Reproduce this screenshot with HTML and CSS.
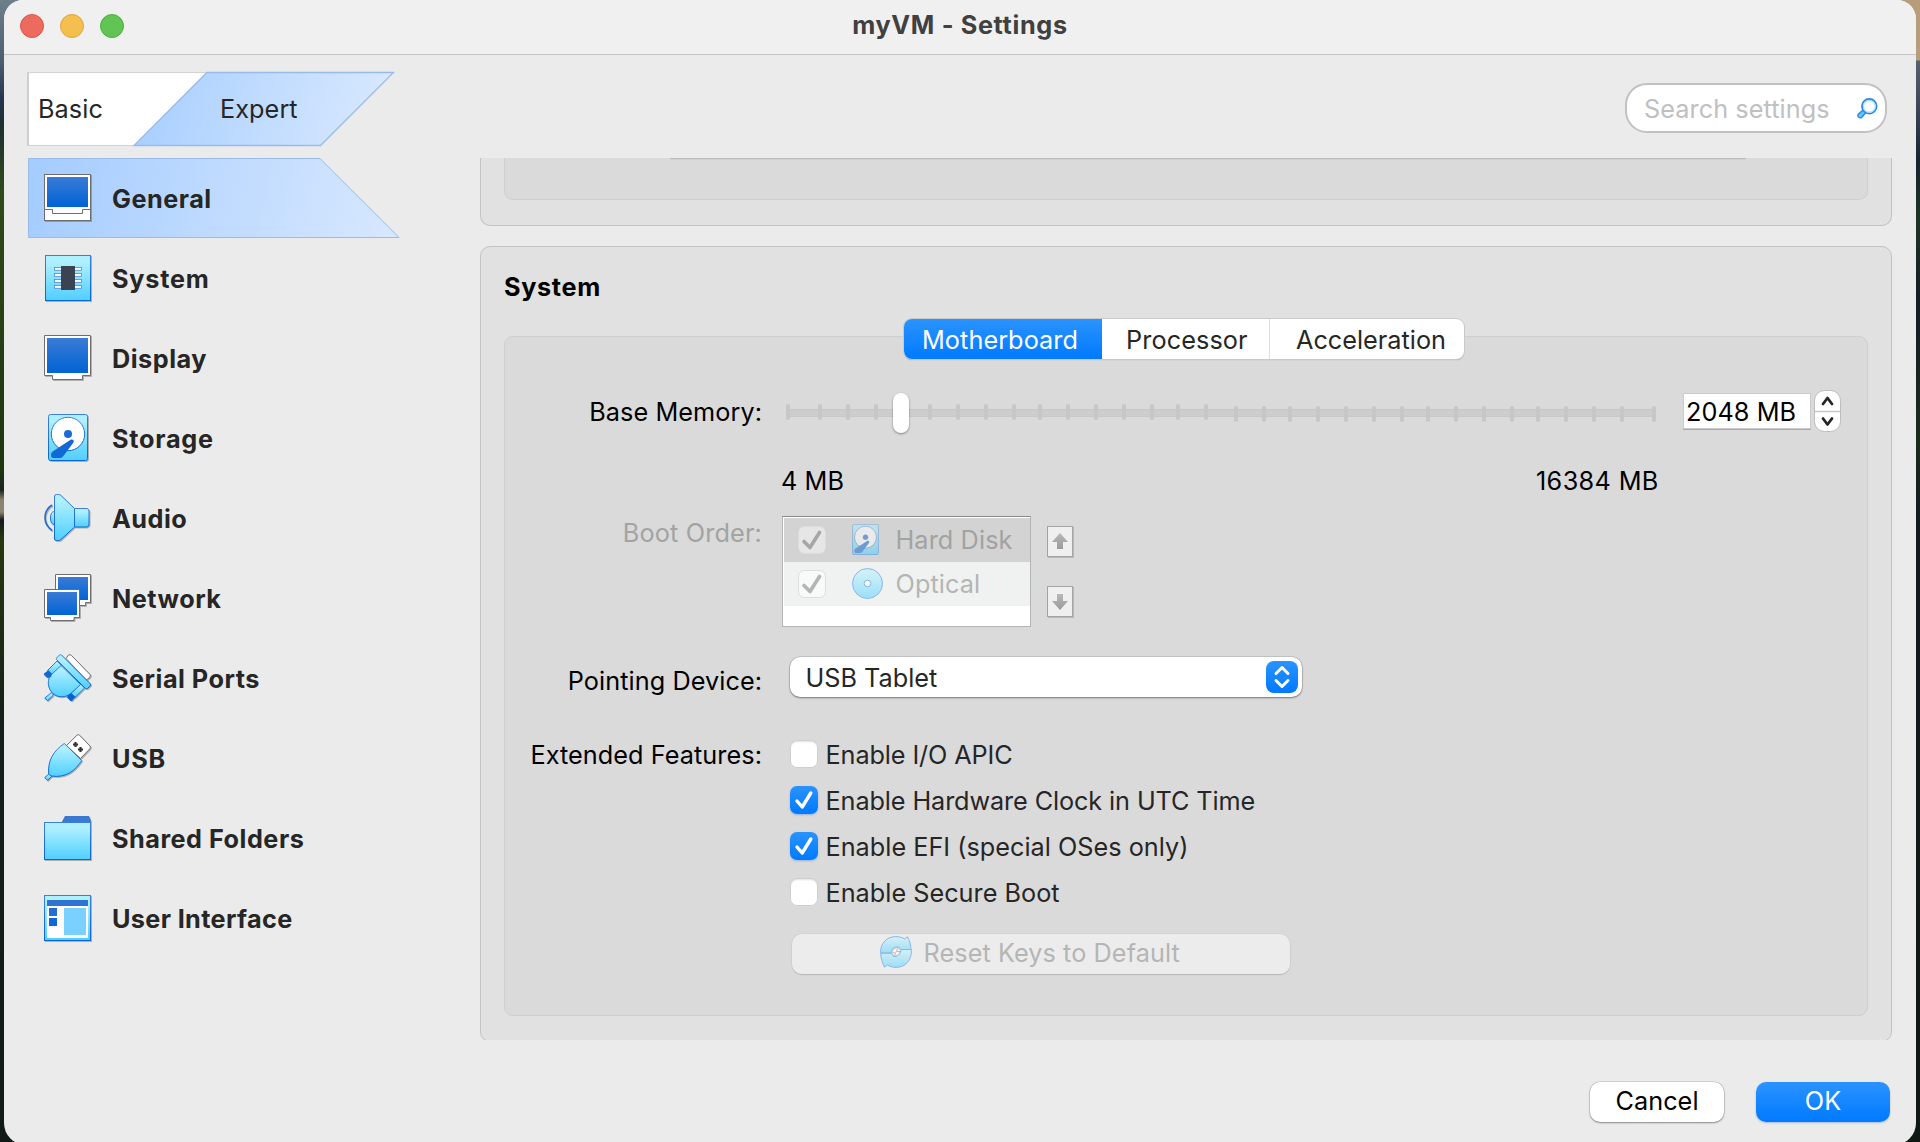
FILE: index.html
```html
<!DOCTYPE html>
<html lang="en">
<head>
<meta charset="utf-8">
<title>myVM - Settings</title>
<link rel="stylesheet" href="styles.css">
</head>
<body>
<svg class="defs" width="0" height="0" aria-hidden="true">
  <defs>
    <linearGradient id="sky" x1="0" y1="0" x2="0" y2="1"><stop offset="0.15" stop-color="#aef0ff"/><stop offset="1" stop-color="#4fcfff"/></linearGradient>
    <linearGradient id="blue" x1="0" y1="0" x2="0" y2="1"><stop offset="0" stop-color="#3a7bd5"/><stop offset="1" stop-color="#0063d5"/></linearGradient>
    <linearGradient id="edge" x1="0" y1="0" x2="0" y2="1"><stop offset="0" stop-color="#3a80d8"/><stop offset="1" stop-color="#0a66d4"/></linearGradient>
    <linearGradient id="grey" x1="0" y1="0" x2="0" y2="1"><stop offset="0" stop-color="#b8b8b8"/><stop offset="1" stop-color="#9a9a9a"/></linearGradient>
    <linearGradient id="pick" gradientUnits="userSpaceOnUse" x1="0" y1="0" x2="372" y2="80"><stop offset="0" stop-color="#a4ccff"/><stop offset="1" stop-color="#d8e8fe"/></linearGradient>
    <linearGradient id="pick2" gradientUnits="userSpaceOnUse" x1="108" y1="30" x2="340" y2="80"><stop offset="0" stop-color="#a8cfff"/><stop offset="1" stop-color="#d6e7fe"/></linearGradient>
    <symbol id="disk" viewBox="0 0 40 47">
      <rect x=".5" y=".5" width="39" height="46" rx="2" fill="url(#sky)" stroke="url(#edge)"/>
      <circle cx="20" cy="20" r="16.7" fill="#fff" stroke="url(#edge)"/>
      <circle cx="20" cy="20" r="4" fill="#1a6bd4"/>
      <path d="M23 25.500Q26.500 25 25.500 28.500L15 42.500Q13.500 44 11.500 44H5Q2.800 43.500 3 41Q3.200 38.500 5 37.300Z" fill="#1268d4"/>
    </symbol>
  </defs>
</svg>

<main class="window">
  <header class="titlebar">
    <div class="lights"><span class="light light-close"></span><span class="light light-min"></span><span class="light light-max"></span></div>
    <h1 class="title">myVM - Settings</h1>
  </header>

  <div class="toolbar">
    <div class="modes">
      <svg class="modes-shape" width="370" height="76" viewBox="0 0 370 76">
        <path d="M1 1.500H180L107 74.500H1Z" fill="#fff" stroke="#d2d2d2"/>
        <path d="M1 1V75" stroke="#cfcfcf" stroke-width="2"/>
        <path d="M180 1.500H366.500L293.500 74.500H107Z" fill="url(#pick2)" stroke="#98bbea" stroke-width="1.300"/>
      </svg>
      <span class="mode mode-basic">Basic</span>
      <span class="mode mode-expert">Expert</span>
    </div>
    <div class="search">
      <span class="search-hint">Search settings</span>
      <svg class="search-icon" width="21" height="21" viewBox="0 0 21 21">
        <path d="M6.500 11.500L1 16.500Q.3 18 1.500 19.200Q3.500 20.500 4.800 19.200L9 14.500Z" fill="#5cc8fb" stroke="#2a86e0" stroke-width="1.300"/>
        <circle cx="12.300" cy="8.300" r="7.300" fill="#fff" stroke="#2f86e2" stroke-width="1.800"/>
        <circle cx="12.300" cy="8.300" r="5.900" fill="none" stroke="#a8e4fb" stroke-width="1.200"/>
      </svg>
    </div>
  </div>

  <div class="body">
    <nav class="nav">
      <div class="nav-item nav-active">
        <svg class="nav-shape" width="374" height="80" viewBox="0 0 374 80"><path d="M.5 .5H292L371 79.500H.5Z" fill="url(#pick)" stroke="#98bbea"/></svg>
        <svg class="icon" viewBox="0 0 48 48"><rect x=".5" y=".5" width="46" height="46" fill="#fff" stroke="#6e6e6e"/><rect x="3" y="3" width="41" height="30" fill="url(#blue)"/><path d="M.5 35.500H8.500V39.500H38.500V35.500H46.500" fill="none" stroke="#6e6e6e"/></svg>
        <span class="nav-label">General</span>
      </div>
      <div class="nav-item">
        <svg class="icon" viewBox="0 0 48 48"><rect x="1.500" y="1.500" width="45" height="45" fill="url(#sky)" stroke="url(#edge)"/><g fill="#fff" stroke="#4f88d8" stroke-width=".8"><rect x="10.500" y="13.500" width="27" height="2.800"/><rect x="10.500" y="19.500" width="27" height="2.800"/><rect x="10.500" y="25.500" width="27" height="2.800"/><rect x="10.500" y="31.500" width="27" height="2.800"/></g><rect x="17" y="12" width="14" height="24" fill="#3b4252"/></svg>
        <span class="nav-label nav-wide">System</span>
      </div>
      <div class="nav-item">
        <svg class="icon" viewBox="0 0 48 48"><path d="M.5 1.500H46.500V41.500H38.500V45.500H8.500V41.500H.5Z" fill="#fff" stroke="#6e6e6e"/><rect x="3" y="4" width="41" height="35" fill="url(#blue)"/></svg>
        <span class="nav-label">Display</span>
      </div>
      <div class="nav-item">
        <svg class="icon" viewBox="0 0 48 48"><use href="#disk" x="4" y="0" width="40" height="47"/></svg>
        <span class="nav-label nav-wide">Storage</span>
      </div>
      <div class="nav-item">
        <svg class="icon" viewBox="0 0 48 48"><g fill="url(#sky)" stroke="url(#edge)"><path d="M10.500 17.500Q6.500 17.500 6.500 24Q6.500 30.500 10.500 30.500Z"/><path d="M30.500 14.500H43Q45 15 45 17V30.500Q45 32.500 43 33H30.500Z"/><path d="M10.500 2Q10.500 .5 12.500 .5H14.500Q16 .5 17 1.500L30.500 14.500V33L17 45.500Q16 46.500 14.500 46.500H12.500Q10.500 46.500 10.500 45Z"/></g><path d="M8 11Q1 15.500 1 23.500Q1 31.500 8 36.500" fill="none" stroke="#1a6fd6" stroke-width="1.600"/></svg>
        <span class="nav-label">Audio</span>
      </div>
      <div class="nav-item">
        <svg class="icon" viewBox="0 0 48 48"><path d="M11.500 .5H46.500V28.500H41.500V31.500H16V28.500H11.500Z" fill="#fff" stroke="#6e6e6e"/><rect x="14" y="3" width="30" height="23" fill="url(#blue)"/><path d="M.5 15.500H35.500V43.500H30V46.500H6.500V43.500H.5Z" fill="#fff" stroke="#6e6e6e"/><rect x="3" y="18" width="30" height="23" fill="url(#blue)"/></svg>
        <span class="nav-label">Network</span>
      </div>
      <div class="nav-item">
        <svg class="icon" viewBox="0 0 48 48"><path d="M22 4.500L24.500 1Q26 0 27.500 1.500L46 20.500Q47 22 45.500 23.500L42.500 26Z" fill="#fff" stroke="#6e6e6e"/><g fill="url(#sky)" stroke="url(#edge)"><path d="M7.500 38.500L.8 44L3.500 46.800L9.500 41Z"/><path d="M13 7L3.500 16.500L8 21L17.500 11.500Z"/><path d="M40.500 34L31 43.500L26.500 39L36 29.500Z"/><path d="M17 11.500L7 21C3.500 25 3.500 32 6.500 36.500C9.500 41.500 15 43.500 20.500 42.500C23.500 42 26 40.500 28 38.500L36.500 30.500Z"/><path d="M12.500 5.500Q12 4.500 13 3.500L15.500 1Q16.500 .2 17.500 1L46.500 30Q47 31 46 32L43.500 34.500Q42.500 35 41.500 34.500Z"/></g><path d="M4.500 16.200L8 19.700L7 23L3.500 24L0 21V19.500Z" fill="#1268d4"/><path d="M27 39L31.500 43L28 47H26.500L23 43.500L24 41Z" fill="#0763d5"/></svg>
        <span class="nav-label">Serial Ports</span>
      </div>
      <div class="nav-item">
        <svg class="icon" viewBox="0 0 48 48"><path d="M22.500 11.500L33 1.200Q34.200 0 35.500 1.200L46 12Q47 13.200 46 14.500L36.500 24.500Z" fill="#fff" stroke="#6e6e6e"/><path d="M29 10.500H34M31.500 8V13M34 15.500H39M36.500 13V18" stroke="#333" stroke-width="2.200"/><g fill="url(#sky)" stroke="url(#edge)"><path d="M6.500 38.500L.8 43.500L3.500 46.500L9 41Z"/><path d="M20.300 9.500L37.700 26.500C32 35.500 23 44.500 7 42L4.700 40C3.500 26 10 16.500 20.300 9.500Z"/></g></svg>
        <span class="nav-label nav-wide">USB</span>
      </div>
      <div class="nav-item">
        <svg class="icon" viewBox="0 0 48 48"><path d="M17.500 8.500L21 2H45L47 7V10H17.500Z" fill="#3a79d2"/><rect x=".5" y="8.500" width="46" height="37" fill="url(#sky)" stroke="url(#edge)"/></svg>
        <span class="nav-label">Shared Folders</span>
      </div>
      <div class="nav-item">
        <svg class="icon" viewBox="0 0 48 48"><rect x=".5" y="1.500" width="46" height="45" fill="url(#sky)" stroke="url(#edge)"/><rect x="3" y="6" width="41" height="6" fill="#3074d3"/><rect x="3" y="12" width="41" height="32" fill="#fff"/><rect x="5" y="14" width="8" height="8" fill="#226fd4"/><rect x="5" y="24" width="8" height="8" fill="#1268d4"/><rect x="20" y="14" width="22" height="27" fill="#7ad0ff"/></svg>
        <span class="nav-label nav-tight">User Interface</span>
      </div>
    </nav>

    <section class="scroll">
      <div class="panel panel-prev">
        <div class="group group-prev"><div class="field-edge"></div></div>
      </div>

      <div class="panel panel-system">
        <h2 class="heading">System</h2>
        <div class="group group-system">
          <div class="tabs">
            <span class="tab tab-on">Motherboard</span>
            <span class="tab tab-cpu">Processor</span>
            <span class="tab tab-acc">Acceleration</span>
          </div>

          <div class="row row-memory">
            <span class="label">Base Memory:</span>
            <svg class="slider" width="880" height="44" viewBox="782 390 880 44">
              <rect x="787" y="409" width="867" height="8" fill="#cdcdcd"/>
              <path d="M787 409.500H1654M787 416.500H1654" stroke="#c8c8c8"/>
              <path d="M788 406V418M820 406V418M848 406V418M876 406V418M930 406V418M958 406V418M986 406V418M1014 406V418M1040 406V418M1068 406V418M1096 406V418M1124 406V418M1152 406V418M1178 406V418M1206 406V418M1236 408V420M1264 408V420M1290 408V420M1318 408V420M1346 408V420M1374 408V420M1402 408V420M1428 408V420M1456 408V420M1484 408V420M1512 408V420M1538 408V420M1566 408V420M1594 408V420M1622 408V420M1654 408V420" stroke="#c7c7c7" stroke-width="4" stroke-linecap="round"/>
              <rect class="thumb" x="893" y="393" width="16" height="40" rx="8" fill="#fff"/>
            </svg>
            <span class="spin-value">2048 MB</span>
            <svg class="stepper" width="28" height="44" viewBox="0 0 28 44">
              <rect x=".5" y=".5" width="26" height="41" rx="10" fill="#fff" stroke="#bdbdbd"/>
              <path d="M1 21.500H26" stroke="#c8c8c8" stroke-width="1.500"/>
              <path d="M9 14L13.500 8L18 14M9 28.500L13.500 34.500L18 28.500" fill="none" stroke="#262626" stroke-width="2.800" stroke-linecap="round" stroke-linejoin="round"/>
            </svg>
          </div>

          <div class="row row-scale">
            <span class="label"></span>
            <span class="scale-min">4 MB</span>
            <span class="scale-max">16384 MB</span>
          </div>

          <div class="row row-boot">
            <span class="label dim">Boot Order:</span>
            <div class="list">
              <div class="list-row list-picked">
                <svg class="check-dim" width="28" height="28" viewBox="0 0 28 28"><rect x=".5" y=".5" width="27" height="27" rx="6" fill="#e6e6e6" stroke="#dcdcdc"/><path d="M6 15.500L12 21.500L21.500 6.500" fill="none" stroke="#a6a6a6" stroke-width="3.600" stroke-linecap="round" stroke-linejoin="round"/></svg>
                <svg class="list-icon" width="31" height="32" viewBox="0 0 31 32"><use href="#disk" x="0" y="0" width="27" height="31"/></svg>
                <span class="list-text">Hard Disk</span>
              </div>
              <div class="list-row list-alt">
                <svg class="check-dim" width="28" height="28" viewBox="0 0 28 28"><rect x=".5" y=".5" width="27" height="27" rx="6" fill="#f8f9f9" stroke="#dcdede"/><path d="M6 15.500L12 21.500L21.500 6.500" fill="none" stroke="#b4b5b5" stroke-width="3.600" stroke-linecap="round" stroke-linejoin="round"/></svg>
                <svg class="list-icon" width="31" height="32" viewBox="0 0 31 32"><circle cx="15.500" cy="15.500" r="15" fill="url(#sky)" stroke="#2f7fe0"/><circle cx="15.500" cy="15.500" r="3.300" fill="#fff" stroke="#3a78d0"/></svg>
                <span class="list-text">Optical</span>
              </div>
            </div>
            <div class="movers">
              <svg class="mover" width="26" height="31" viewBox="0 0 26 31"><rect x=".5" y=".5" width="25" height="30" fill="#efefef" stroke="#a4a4a4"/><path d="M13 7L21 16H16V23H10V16H5Z" fill="url(#grey)"/></svg>
              <svg class="mover" width="26" height="31" viewBox="0 0 26 31"><rect x=".5" y=".5" width="25" height="30" fill="#efefef" stroke="#a4a4a4"/><path d="M13 24L21 15H16V8H10V15H5Z" fill="url(#grey)"/></svg>
            </div>
          </div>

          <div class="row row-pointing">
            <span class="label">Pointing Device:</span>
            <div class="select"><span>USB Tablet</span>
              <svg class="select-knob" width="32" height="32" viewBox="0 0 32 32"><path d="M10 12.500L16 6.500L22 12.500M10 19.500L16 25.500L22 19.500" fill="none" stroke="#fff" stroke-width="3" stroke-linecap="round" stroke-linejoin="round"/></svg>
            </div>
          </div>

          <div class="row row-features">
            <span class="label">Extended Features:</span>
            <div class="checks">
              <div class="check"><span class="box"></span><span class="check-tight">Enable I/O APIC</span></div>
              <div class="check"><svg class="box box-on" viewBox="0 0 28 28"><path d="M7 15L12.200 21L20.800 7" fill="none" stroke="#fff" stroke-width="3.400" stroke-linecap="round" stroke-linejoin="round"/></svg><span class="check-tight">Enable Hardware Clock in UTC Time</span></div>
              <div class="check"><svg class="box box-on" viewBox="0 0 28 28"><path d="M7 15L12.200 21L20.800 7" fill="none" stroke="#fff" stroke-width="3.400" stroke-linecap="round" stroke-linejoin="round"/></svg><span class="check-snug">Enable EFI (special OSes only)</span></div>
              <div class="check"><span class="box"></span><span class="check-snug">Enable Secure Boot</span></div>
            </div>
          </div>

          <div class="row row-reset">
            <span class="label"></span>
            <div class="reset">
              <svg class="reset-icon" width="33" height="33" viewBox="0 0 33 33"><g fill="url(#sky)" stroke="#2f7fe0"><path d="M.7 17C-.2 7 7.500 .6 15.500 .6C19.500 .6 22.500 1.500 24.500 3L27.500 .8C29.500 4.500 31 9 31 13.500H20.500L18.500 11C14.500 10.500 11.500 13 11 17Z"/><path d="M31.300 13.500C32.300 24 25 31.400 16.500 31.400C12.500 31.400 9.500 30.500 7.500 29L4.500 31.200C2.500 27.500 .7 22 .7 17.300H11.500L13.500 20.500C17.500 21 20.500 18 21 13.500Z"/></g><path d="M12 16.800C12.500 13 15 11.500 18 11.800L16.300 15.500H20C19.500 19 17 20.200 14.300 19.800L16 16.800Z" fill="#fff" stroke="#6e6e6e" stroke-width=".7"/></svg>
              <span>Reset Keys to Default</span>
            </div>
          </div>
        </div>
      </div>
    </section>
  </div>

  <footer class="footer">
    <span class="button">Cancel</span>
    <span class="button button-ok">OK</span>
  </footer>
</main>
</body>
</html>
```
FILE: styles.css
```css
* { box-sizing: border-box; }

html, body { height: 100%; margin: 0; overflow: hidden; }

body {
  padding: 0 4px;
  background:
    linear-gradient(#6d7f8a 0, #4d5f70 60px, #24344c 100px, #1d3030 125px, #2f4a1c 190px, #1f3510 470px, #1a2420 490px, #8a8470 500px, #8a8470 512px, #17191c 520px, #26380f 540px, #14201a 720px, #101a16 100%) left / 24px 100% no-repeat,
    linear-gradient(#b79d7c 0, #b79d7c 60px, #59616e 61px, #333f50 120px, #142430 160px, #1d3424 220px, #141c26 300px, #1a2c1c 440px, #121a20 520px, #101814 100%) right / 24px 100% no-repeat,
    #101814;
  font: 400 25.25px/30px Inter, "Liberation Sans", sans-serif;
  letter-spacing: 0.06px;
  color: #262626;
}

h1, h2 { margin: 0; font-size: inherit; font-weight: 700; }

svg { display: block; flex: none; overflow: visible; }

.defs { position: absolute; }

.window {
  display: flex;
  flex-direction: column;
  height: 1145px;
  overflow: hidden;
  border-radius: 19px 19px 22px 22px;
  background: #ebebeb;
}

.titlebar {
  display: grid;
  grid-template-columns: 1fr auto 1fr;
  height: 55px;
  border-bottom: 1px solid #c4c4c4;
  background: #f0f0f0;
}

.lights { display: flex; gap: 16px; padding: 14px 0 0 16px; }
.light { width: 24px; height: 24px; border: 1px solid; border-radius: 50%; }
.light-close { background: #ec6a5e; border-color: #d8584d; }
.light-min { background: #f4bf4f; border-color: #dba43c; }
.light-max { background: #61c554; border-color: #50ab43; }

.title { padding-top: 10px; letter-spacing: 0.65px; color: #404040; }

/* Mode switch and search */
.toolbar {
  display: flex;
  justify-content: space-between;
  height: 103px;
  padding: 16px 29px 0 23px;
}

.modes { position: relative; display: flex; width: 370px; height: 76px; padding-top: 23px; }
.modes-shape { position: absolute; top: 0; left: 0; }
.mode { position: relative; }
.mode-basic { width: 181px; padding-left: 11px; }
.mode-expert { padding-left: 12px; }

.search {
  display: flex;
  justify-content: space-between;
  width: 262px;
  height: 50px;
  margin-top: 12px;
  padding: 9px 7px 0 17px;
  border: 2px solid #c1c1c1;
  border-radius: 22px;
  background: #fff;
}
.search-hint { color: #c0c0c0; }
.search-icon { margin-top: 4px; }

/* Sidebar */
.body { display: flex; height: 882px; }
.nav { width: 476px; padding-left: 24px; }
.nav-item { position: relative; display: flex; align-items: center; height: 80px; padding-left: 16px; }
.nav-shape { position: absolute; top: 0; left: 0; }
.icon { position: relative; width: 48px; height: 48px; filter: drop-shadow(1px 1px 0 rgba(0, 0, 0, 0.25)); }
.nav-label { position: relative; padding: 2px 0 0 20px; font-weight: 700; letter-spacing: 0.5px; }
.nav-wide { letter-spacing: 0.75px; }
.nav-tight { letter-spacing: 0.35px; }

/* Scrolled settings pages */
.scroll { display: flex; flex-direction: column; gap: 20px; width: 1412px; height: 882px; overflow: hidden; }
.panel { flex: none; border: 1px solid #c3c3c3; border-radius: 10px; background: #e1e1e1; }
.group { border: 1px solid #cfcfcf; border-radius: 9px; background: #dadada; }

.panel-prev { height: 68px; padding: 0 23px; border-top: 0; border-radius: 0 0 10px 10px; }
.group-prev { height: 42px; border-top: 0; border-radius: 0 0 9px 9px; }
.field-edge { width: 1076px; height: 2px; margin-left: 165px; border-radius: 0 0 4px 4px; background: linear-gradient(#bcbcbc 50%, #d2d2d2 50%); }

.panel-system { height: 796px; padding: 25px 23px 0; }
.heading { color: #000; letter-spacing: 0.65px; }
.group-system { height: 680px; margin-top: 34px; }

.tabs {
  display: flex;
  width: 560px;
  height: 40px;
  margin: -18px 0 0 399px;
  border-radius: 8px;
  background: #fff;
  box-shadow: 0 0 0 1px #c9c9c9, 0 1px 1px rgba(0, 0, 0, 0.35);
}
.tab { padding-top: 6px; }
.tab-on { width: 198px; padding-left: 18px; border-radius: 8px 0 0 8px; background: linear-gradient(#2b93ff, #007aff); color: #fff; letter-spacing: 0.06px; }
.tab-cpu { width: 168px; padding-left: 24px; border-right: 1px solid #dedede; letter-spacing: 0.1px; }
.tab-acc { padding-left: 26px; letter-spacing: 0; }

.row { display: flex; }
.label { width: 257px; margin-right: 20px; text-align: right; color: #000; }
.dim { color: #a3a3a3; letter-spacing: 0.15px; }

.row-memory { margin-top: 31px; }
.row-memory .label { padding-top: 7px; }
.thumb { filter: drop-shadow(0 1px 1px rgba(0, 0, 0, 0.4)); }
.spin-value {
  width: 126px;
  height: 34px;
  margin: 4px 4px 0 22px;
  padding: 3px 0 0 2px;
  background: #fff;
  box-shadow: 0 0 0 1px #cbcbcb, 0 1px 0 1px #a9a9a9;
  color: #000;
}

.row-scale { margin-top: 32px; color: #000; }
.scale-min { width: 754px; margin-left: -1px; }
.scale-max { margin-left: 1px; letter-spacing: 0.35px; }

.row-boot { margin-top: 20px; }
.row-boot .label { padding-top: 2px; }
.list { width: 249px; height: 111px; padding: 1px 0 0 1px; border: 1px solid #b4b4b4; border-top-color: #888; background: #fff; }
.list-row { display: flex; height: 44px; padding: 8px 0 0 14px; }
.list-picked { background: #d3d3d3; }
.list-alt { background: #f0f2f2; }
.list-icon { margin: -2px 0 0 26px; opacity: 0.52; }
.list-text { padding-left: 12.500px; margin-top: -1px; color: #a2a2a2; letter-spacing: 0.1px; }
.list-alt .list-text { color: #b4b5b5; }
.movers { display: flex; flex-direction: column; gap: 29px; padding: 10px 0 0 16px; }
.mover { filter: drop-shadow(1px 1px 0 rgba(0, 0, 0, 0.15)); }

.row-pointing { margin-top: 30px; }
.row-pointing .label { padding-top: 9px; }
.select {
  display: flex;
  justify-content: space-between;
  width: 512px;
  height: 40px;
  margin-left: 8px;
  padding: 6px 4px 0 15.500px;
  border-radius: 10px;
  background: #fff;
  box-shadow: 0 0 0 0.500px rgba(0, 0, 0, 0.2), 0 1px 2px rgba(0, 0, 0, 0.4);
  letter-spacing: 0;
}
.select-knob { margin-top: -2px; border-radius: 8px; background: linear-gradient(#2b93ff, #007aff); }

.row-features { margin-top: 43px; }
.checks { display: flex; flex-direction: column; gap: 16px; margin-left: 8px; }
.check { display: flex; gap: 7.500px; height: 30px; }
.check-tight { letter-spacing: -0.110px; }
.check-snug { letter-spacing: 0.010px; }
.box {
  width: 28px;
  height: 28px;
  border-radius: 7px;
  background: #fff;
  box-shadow: inset 0 0 0 1px #cfcfcf, inset 0 2px 2px rgba(0, 0, 0, 0.12);
}
.box-on { background: linear-gradient(#2b93ff, #007aff); box-shadow: 0 1px 2px rgba(0, 80, 200, 0.3); }

.row-reset { margin-top: 26px; }
.reset {
  display: flex;
  width: 498px;
  height: 40px;
  margin-left: 9.500px;
  padding: 4px 0 0 88px;
  border-radius: 10px;
  background: #ececec;
  box-shadow: 0 0 0 0.500px #cacaca, 0 1px 1px rgba(0, 0, 0, 0.22);
  color: #b5b5b5;
  letter-spacing: 0.070px;
}
.reset-icon { margin: -2px 11px 0 0; opacity: 0.5; }

/* Dialog buttons */
.footer { display: flex; justify-content: flex-end; gap: 32px; padding: 42px 26px 0 0; }
.button {
  width: 134px;
  height: 40px;
  padding-top: 4px;
  border-radius: 10px;
  background: #fff;
  box-shadow: 0 0 0 0.500px rgba(0, 0, 0, 0.2), 0 1px 2px rgba(0, 0, 0, 0.35);
  color: #000;
  text-align: center;
}
.button-ok { background: linear-gradient(#2b93ff, #007aff); box-shadow: 0 1px 2px rgba(0, 80, 200, 0.3); color: #fff; }
```
